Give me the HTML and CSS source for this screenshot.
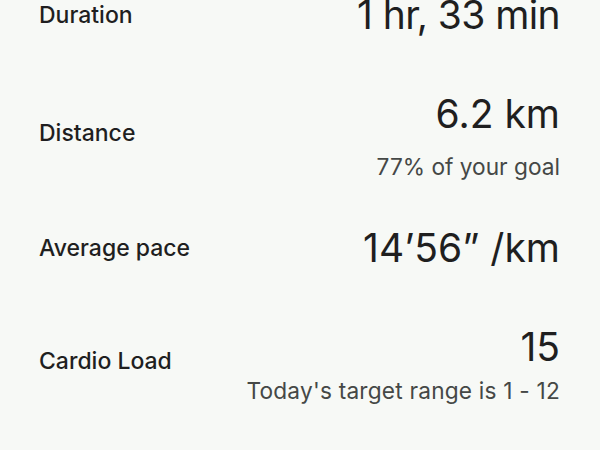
FILE: index.html
```html
<!DOCTYPE html>
<html lang="en">
<head>
<meta charset="utf-8">
<link rel="stylesheet" href="styles.css">
</head>
<body>
<main class="stats">
  <section class="row row--first">
    <div class="label">Duration</div>
    <div class="value-block">
      <div class="value value--tight">1 hr, 33 min</div>
    </div>
  </section>
  <section class="row">
    <div class="label label--raised">Distance</div>
    <div class="value-block">
      <div class="value">6.2 km</div>
      <div class="sub">77% of your goal</div>
    </div>
  </section>
  <section class="row row--pace">
    <div class="label">Average pace</div>
    <div class="value-block">
      <div class="value">14’56” /km</div>
    </div>
  </section>
  <section class="row">
    <div class="label label--raised-more">Cardio Load</div>
    <div class="value-block">
      <div class="value">15</div>
      <div class="sub sub--tight">Today's target range is 1 - 12</div>
    </div>
  </section>
</main>
</body>
</html>
```

FILE: styles.css
```css
html, body {
  margin: 0;
  padding: 0;
  background: #f7f9f6;
}
body {
  width: 600px;
  height: 450px;
  overflow: hidden;
  font-family: "Inter", "Roboto", sans-serif;
  color: #1f1f1f;
}
.stats {
  margin-top: -35px;
  padding: 0 40px 0 39px;
}
.row {
  display: flex;
  justify-content: space-between;
  align-items: center;
  padding: 22px 0;
}
.row--first {
  padding: 28px 0 33px;
}
.row--pace {
  padding-bottom: 33px;
}
.label {
  font-size: 23px;
  font-weight: 500;
  line-height: 30px;
}
.label--raised {
  margin-bottom: 9px;
}
.label--raised-more {
  margin-bottom: 10px;
}
.value-block {
  display: flex;
  flex-direction: column;
  align-items: flex-end;
}
.value {
  font-size: 39px;
  font-weight: 400;
  line-height: 44px;
}
.value--tight {
  letter-spacing: -0.6px;
}
.sub {
  margin-top: 16px;
  font-size: 22.7px;
  line-height: 30px;
  color: #454846;
}
.sub--tight {
  margin-top: 7px;
  letter-spacing: 0.2px;
}
```
